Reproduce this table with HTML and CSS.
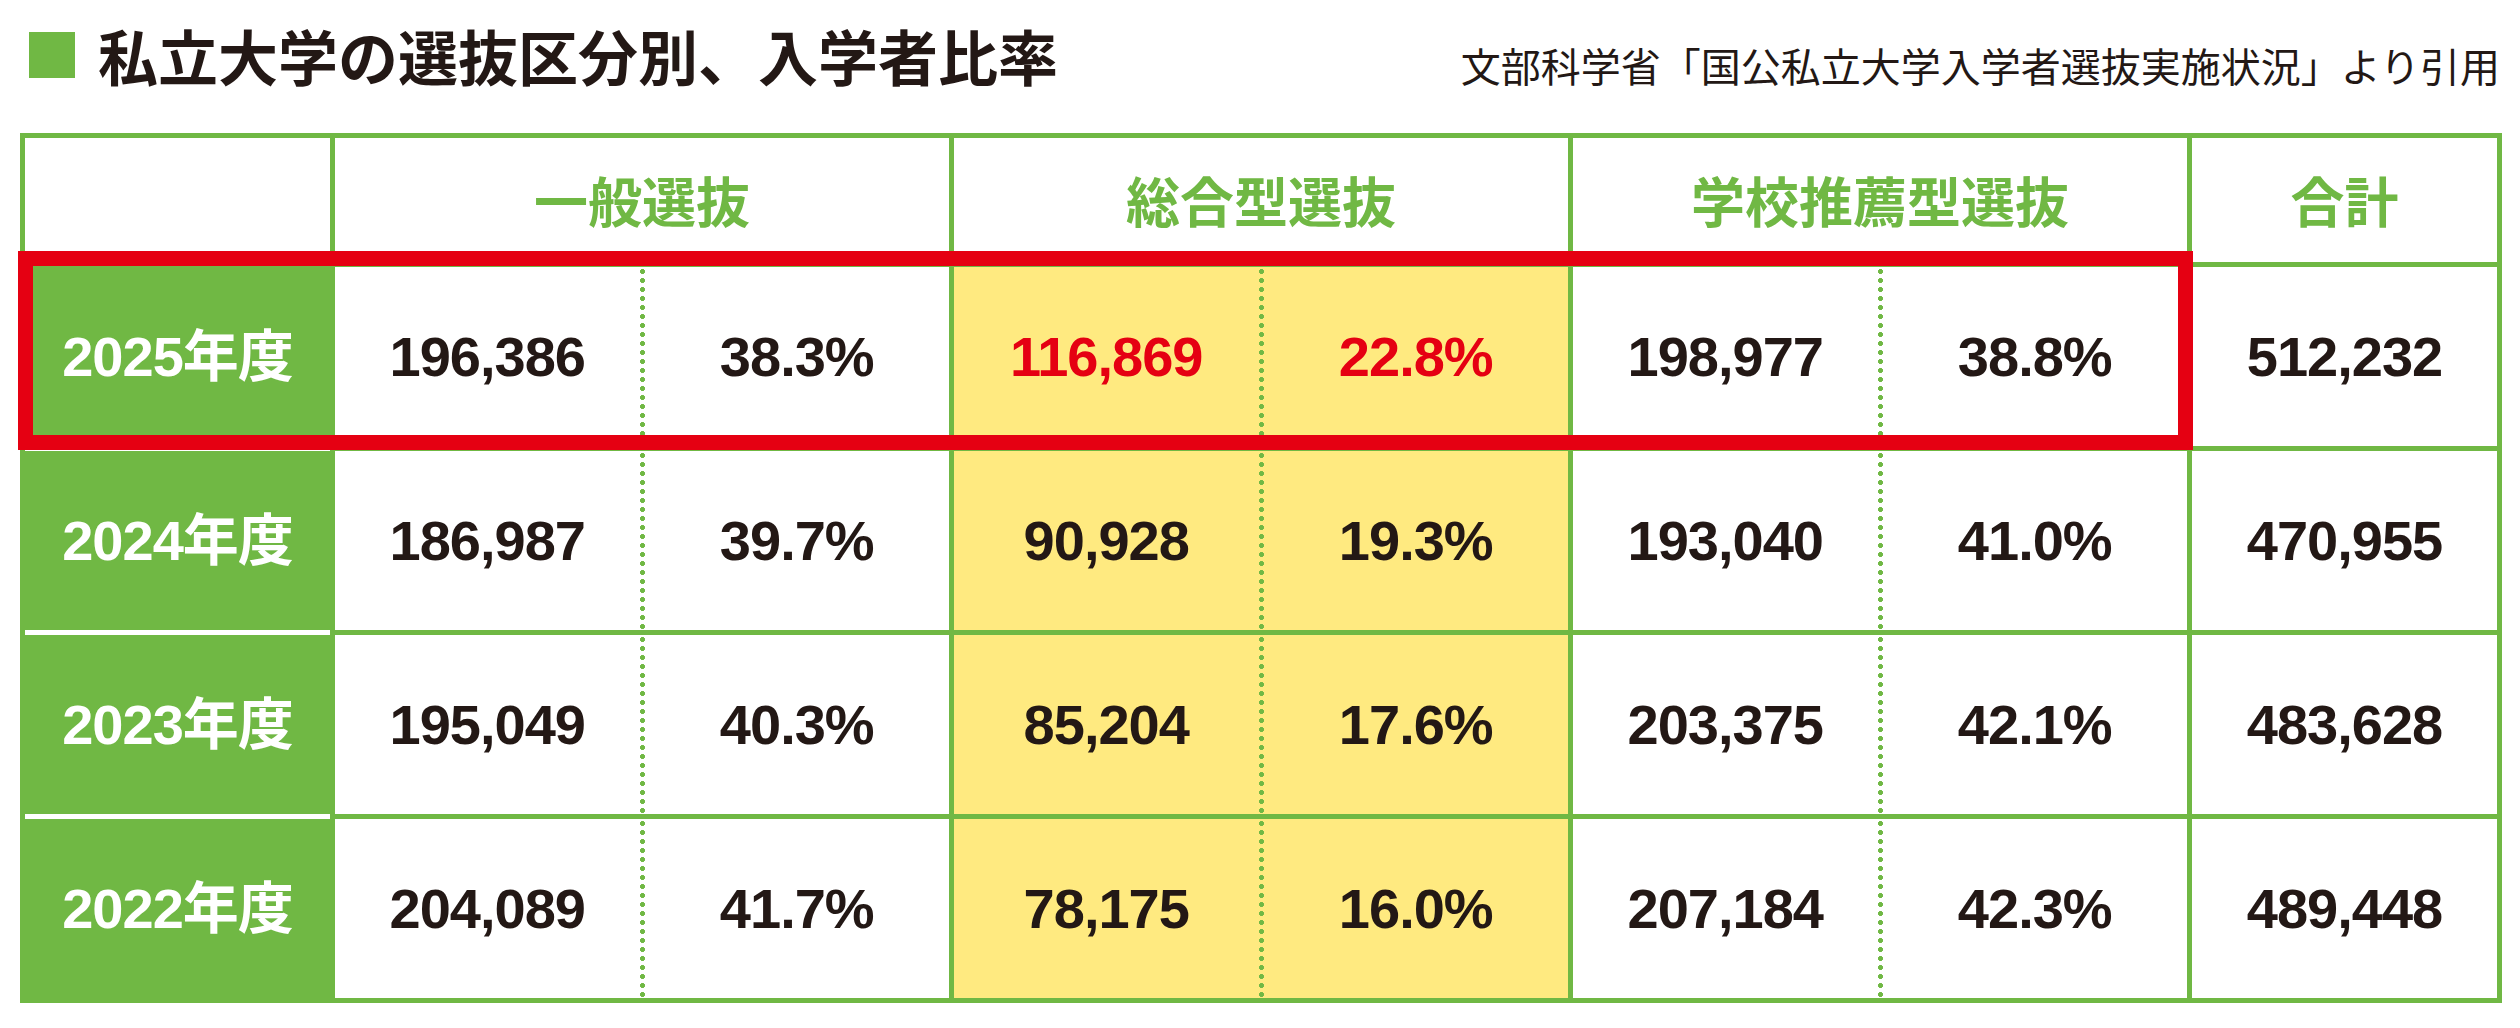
FILE: index.html
```html
<!DOCTYPE html>
<html lang="ja">
<head>
<meta charset="utf-8">
<title>私立大学の選抜区分別、入学者比率</title>
<link rel="stylesheet" href="styles.css">
</head>
<body>
<div class="page">
  <header class="head">
    <h1 class="title"><span class="mark"></span>私立大学の選抜区分別、入学者比率</h1>
    <p class="source">文部科学省「国公私立大学入学者選抜実施状況」より引用</p>
  </header>
  <div class="table-wrap">
    <div class="grid">
      <div class="cell hcell"></div>
      <div class="cell hcell">一般選抜</div>
      <div class="cell hcell">総合型選抜</div>
      <div class="cell hcell">学校推薦型選抜</div>
      <div class="cell hcell">合計</div>

      <div class="cell year">2025年度</div>
      <div class="cell group"><span class="half">196,386</span><span class="dots"></span><span class="half">38.3%</span></div>
      <div class="cell group yellow red"><span class="half">116,869</span><span class="dots"></span><span class="half">22.8%</span></div>
      <div class="cell group"><span class="half">198,977</span><span class="dots"></span><span class="half">38.8%</span></div>
      <div class="cell total">512,232</div>

      <div class="cell year sep">2024年度</div>
      <div class="cell group"><span class="half">186,987</span><span class="dots"></span><span class="half">39.7%</span></div>
      <div class="cell group yellow"><span class="half">90,928</span><span class="dots"></span><span class="half">19.3%</span></div>
      <div class="cell group"><span class="half">193,040</span><span class="dots"></span><span class="half">41.0%</span></div>
      <div class="cell total">470,955</div>

      <div class="cell year sep">2023年度</div>
      <div class="cell group"><span class="half">195,049</span><span class="dots"></span><span class="half">40.3%</span></div>
      <div class="cell group yellow"><span class="half">85,204</span><span class="dots"></span><span class="half">17.6%</span></div>
      <div class="cell group"><span class="half">203,375</span><span class="dots"></span><span class="half">42.1%</span></div>
      <div class="cell total">483,628</div>

      <div class="cell year sep">2022年度</div>
      <div class="cell group"><span class="half">204,089</span><span class="dots"></span><span class="half">41.7%</span></div>
      <div class="cell group yellow"><span class="half">78,175</span><span class="dots"></span><span class="half">16.0%</span></div>
      <div class="cell group"><span class="half">207,184</span><span class="dots"></span><span class="half">42.3%</span></div>
      <div class="cell total">489,448</div>
    </div>
    <div class="highlight"></div>
  </div>
</div>
</body>
</html>
```
FILE: styles.css
```css
html, body {
  margin: 0;
  padding: 0;
  background: #ffffff;
}

.page {
  padding: 25px 0 0 20px;
  color: #231815;
  font-family: "Noto Sans CJK JP", "Noto Sans", sans-serif;
}

.head {
  display: flex;
  align-items: flex-end;
  justify-content: space-between;
  width: 2482px;
  height: 60px;
  margin-bottom: 48px;
}

.title {
  display: flex;
  align-items: center;
  margin: 0 0 0 9px;
  font-size: 60px;
  line-height: 60px;
  height: 60px;
  font-weight: 700;
  letter-spacing: 0;
}

.mark {
  display: block;
  width: 46px;
  height: 46px;
  margin-right: 23px;
  background: #70b844;
}

.source {
  margin: 0 2px 0 0;
  font-size: 40px;
  line-height: 40px;
  font-weight: 400;
}

.table-wrap {
  position: relative;
  width: max-content;
}

.grid {
  display: grid;
  grid-template-columns: 305px 614px 614px 614px 305px;
  grid-template-rows: 124px repeat(4, 179px);
  gap: 5px;
  padding: 5px;
  background: #70b844;
}

.cell {
  background: #ffffff;
  display: flex;
  align-items: center;
  justify-content: center;
  font-family: "Liberation Sans", "Noto Sans CJK JP", sans-serif;
  font-weight: 700;
  font-size: 56px;
  letter-spacing: -1px;
  line-height: 1;
  color: #231815;
}

.hcell {
  font-family: "Noto Sans CJK JP", sans-serif;
  font-size: 54px;
  letter-spacing: 0;
  color: #70b844;
}

.year {
  background: #70b844;
  color: #ffffff;
}

.year.sep {
  box-shadow: 0 -5px 0 #ffffff;
}

.group {
  align-items: stretch;
}

.half {
  flex: 1;
  display: flex;
  align-items: center;
  justify-content: center;
}

.dots {
  width: 5px;
  background: radial-gradient(circle at 2.5px 4.5px, #70b844 2.2px, rgba(112, 184, 68, 0) 2.8px) 0 0 / 5px 9px repeat-y;
}

.yellow {
  background: #ffea80;
}

.red {
  color: #e50012;
}

.highlight {
  position: absolute;
  left: -2px;
  top: 118px;
  width: 2175px;
  height: 199px;
  box-sizing: border-box;
  border: 15px solid #e50012;
}
```
